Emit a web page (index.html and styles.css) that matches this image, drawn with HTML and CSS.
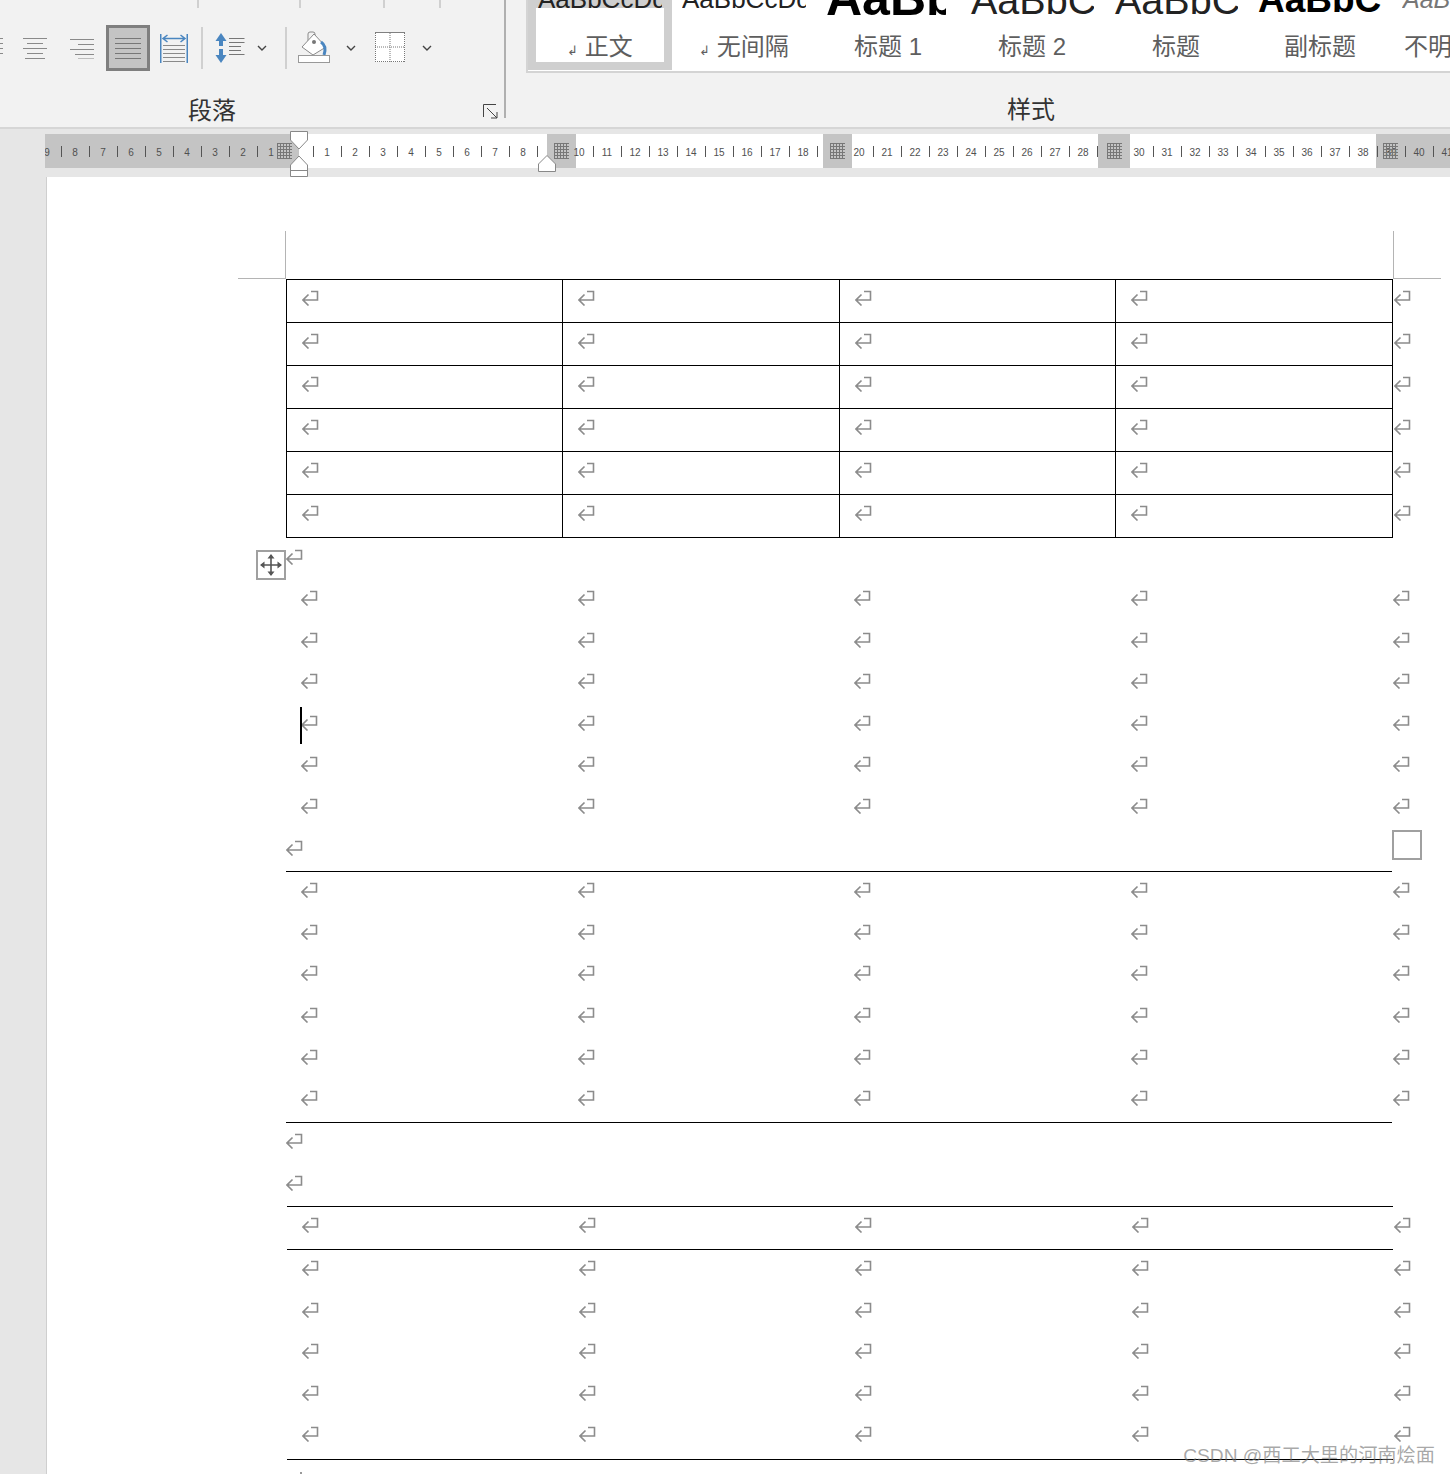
FILE: index.html
```html
<!DOCTYPE html>
<html>

<head>
	<meta charset="utf-8" />
	<title>文档</title>
	<link rel="stylesheet" href="styles.css">
</head>

<body>
	<svg class="defs" width="0" height="0">
		<symbol id="ret" viewBox="1 0 18 16">
			<path d="M10 1.5H16.5V10H2M7.5 4.5L2 10L7.5 15.5" fill="none" stroke="#8c8c8c" stroke-width="1.6" />
		</symbol>
		<symbol id="chev" viewBox="0 0 10 6">
			<path d="M1 1L5 5L9 1" fill="none" stroke="#444" stroke-width="1.4" />
		</symbol>
	</svg>

	<div class="ribbon">
		<div class="group-para">
			<div class="top-ticks">
				<i class="tt tt1"></i><i class="tt tt2"></i><i class="tt tt3"></i><i class="tt tt4"></i>
			</div>
			<div class="tools">
				<svg class="t-clip" width="3" height="22" viewBox="0 0 3 22">
					<path d="M0 1.5H3M0 6.5H3M0 11.5H3M0 16.5H3" stroke="#8a8a8a" />
				</svg>
				<svg class="t-center" width="26" height="22" viewBox="0 0 26 22">
					<path d="M1 1.5H25M5 6.5H21M1 11.5H25M5 16.5H21M3 21.5H23" stroke="#8a8a8a" />
				</svg>
				<svg class="t-right" width="26" height="22" viewBox="0 0 26 22">
					<path d="M1 2.5H25M9 7.5H25M1 12.5H25M6 17.5H25M9 22H25" stroke="#8a8a8a" />
				</svg>
				<button class="t-justify">
					<svg width="26" height="22" viewBox="0 0 26 22">
						<path d="M0 1.5H26M0 6.5H26M0 11.5H26M0 16.5H26M0 21.5H26" stroke="#777" />
					</svg>
				</button>
				<svg class="t-dist" width="28" height="29" viewBox="0 0 28 29">
					<path d="M.75 0V29M27.25 0V29M3 4.5H25M7.5 1L3 4.5L7.5 8M20.5 1L25 4.5L20.5 8" fill="none" stroke="#4a86c0" stroke-width="1.5" />
					<path d="M3 11.5H25M3 15.5H25M3 19.5H25M3 23.5H25M3 27.5H25" stroke="#8a8a8a" />
				</svg>
				<i class="t-sep sep1"></i>
				<svg class="t-spacing" width="30" height="30" viewBox="0 0 30 30">
					<path d="M6 0L11.5 8H8V13H4V8H.5ZM6 30L11.5 22H8V16H4V22H.5Z" fill="#4a86c0" />
					<path d="M14 5.5H29.5M14 9.5H29.5M14 13.5H26M14 17.5H26M14 21.5H29.5" stroke="#777" />
				</svg>
				<svg class="t-chev1" width="10" height="6"><use href="#chev" /></svg>
				<i class="t-sep sep2"></i>
				<svg class="t-bucket" width="34" height="32" viewBox="0 0 34 32">
					<path d="M11 9V2Q11 0 13 0H16Q18 0 18 2V10" fill="none" stroke="#8a8a8a" />
					<path d="M17 2L29 15L16 23L5 15Z" fill="#fff" stroke="#8a8a8a" />
					<circle cx="17" cy="10" r="2" fill="#777" />
					<path d="M24 10Q30 14 27 23" fill="none" stroke="#4a86c0" stroke-width="3" />
					<rect x="1.5" y="23.5" width="31" height="7" fill="#fff" stroke="#999" />
				</svg>
				<svg class="t-chev2" width="10" height="6"><use href="#chev" /></svg>
				<svg class="t-borders" width="30" height="30" viewBox="0 0 30 30">
					<rect x="0" y="0" width="30" height="30" fill="#fff" />
					<path d="M0 .5H30" stroke="#808080" />
					<path d="M.5 1V30M15 1V30M29.5 1V30M0 15H30M0 29.5H30" stroke="#777" stroke-dasharray="1 1" />
				</svg>
				<svg class="t-chev3" width="10" height="6"><use href="#chev" /></svg>
			</div>
			<div class="group-foot">
				<span class="group-name">段落</span>
				<svg class="launcher" width="15" height="15" viewBox="0 0 15 15">
					<path d="M13 .5H.5V13M4 4L14 14M14 8V14H8" fill="none" stroke="#444" />
				</svg>
			</div>
		</div>

		<div class="group-styles">
			<div class="gallery">
				<div class="style-cell selected">
					<div class="preview"><span class="pv-small">AaBbCcDd</span></div>
					<div class="style-name"><span class="small-ret">↲</span> 正文</div>
				</div>
				<div class="style-cell">
					<div class="preview"><span class="pv-small">AaBbCcDd</span></div>
					<div class="style-name"><span class="small-ret">↲</span> 无间隔</div>
				</div>
				<div class="style-cell">
					<div class="preview"><span class="pv-h1">AaBbC</span></div>
					<div class="style-name">标题 1</div>
				</div>
				<div class="style-cell">
					<div class="preview"><span class="pv-h2">AaBbC</span></div>
					<div class="style-name">标题 2</div>
				</div>
				<div class="style-cell">
					<div class="preview"><span class="pv-h2">AaBbC</span></div>
					<div class="style-name">标题</div>
				</div>
				<div class="style-cell">
					<div class="preview"><span class="pv-sub">AaBbC</span></div>
					<div class="style-name">副标题</div>
				</div>
				<div class="style-cell">
					<div class="preview"><span class="pv-em">AaBbCcDd</span></div>
					<div class="style-name">不明显强调</div>
				</div>
			</div>
			<div class="styles-foot">样式</div>
		</div>
	</div>

	<div class="ruler-band">
		<div class="ruler">
			<div class="ruler-nums">
				<span>9</span><span>8</span><span>7</span><span>6</span><span>5</span><span>4</span><span>3</span><span>2</span><span class="nobar">1</span><span></span>
				<span>1</span><span>2</span><span>3</span><span>4</span><span>5</span><span>6</span><span>7</span><span>8</span><span class="nobar"></span>
				<span>10</span><span>11</span><span>12</span><span>13</span><span>14</span><span>15</span><span>16</span><span>17</span><span>18</span><span class="nobar"></span>
				<span>20</span><span>21</span><span>22</span><span>23</span><span>24</span><span>25</span><span>26</span><span>27</span><span>28</span><span class="nobar"></span>
				<span>30</span><span>31</span><span>32</span><span>33</span><span>34</span><span>35</span><span>36</span><span>37</span><span>38</span><span>39</span>
				<span>40</span><span>41</span>
			</div>
			<i class="gridmark g1"></i><i class="gridmark g2"></i><i class="gridmark g3"></i><i class="gridmark g4"></i><i class="gridmark g5"></i>
		</div>
		<svg class="indent-left" width="18" height="46" viewBox="0 0 18 46">
			<path d="M.5 .5H17.5V9L9 18L.5 9Z" fill="#fff" stroke="#888" />
			<path d="M9 25L17.5 34V45.5H.5V34ZM.5 39.5H17.5" fill="#fff" stroke="#888" />
		</svg>
		<svg class="indent-right" width="18" height="17" viewBox="0 0 18 17">
			<path d="M9 .5L17.5 9V16.5H.5V9Z" fill="#fff" stroke="#888" />
		</svg>
	</div>

	<div class="workspace">
		<div class="page">
			<div class="crop-row"><i class="crop crop-l"></i><i class="crop crop-r"></i></div>

			<div class="boxed">
				<div class="row"><div class="cell"><svg class="mk"><use href="#ret" /></svg></div><div class="cell"><svg class="mk"><use href="#ret" /></svg></div><div class="cell"><svg class="mk"><use href="#ret" /></svg></div><div class="cell"><svg class="mk"><use href="#ret" /></svg></div><div class="end"><svg class="mk"><use href="#ret" /></svg></div></div>
				<div class="row"><div class="cell"><svg class="mk"><use href="#ret" /></svg></div><div class="cell"><svg class="mk"><use href="#ret" /></svg></div><div class="cell"><svg class="mk"><use href="#ret" /></svg></div><div class="cell"><svg class="mk"><use href="#ret" /></svg></div><div class="end"><svg class="mk"><use href="#ret" /></svg></div></div>
				<div class="row"><div class="cell"><svg class="mk"><use href="#ret" /></svg></div><div class="cell"><svg class="mk"><use href="#ret" /></svg></div><div class="cell"><svg class="mk"><use href="#ret" /></svg></div><div class="cell"><svg class="mk"><use href="#ret" /></svg></div><div class="end"><svg class="mk"><use href="#ret" /></svg></div></div>
				<div class="row"><div class="cell"><svg class="mk"><use href="#ret" /></svg></div><div class="cell"><svg class="mk"><use href="#ret" /></svg></div><div class="cell"><svg class="mk"><use href="#ret" /></svg></div><div class="cell"><svg class="mk"><use href="#ret" /></svg></div><div class="end"><svg class="mk"><use href="#ret" /></svg></div></div>
				<div class="row"><div class="cell"><svg class="mk"><use href="#ret" /></svg></div><div class="cell"><svg class="mk"><use href="#ret" /></svg></div><div class="cell"><svg class="mk"><use href="#ret" /></svg></div><div class="cell"><svg class="mk"><use href="#ret" /></svg></div><div class="end"><svg class="mk"><use href="#ret" /></svg></div></div>
				<div class="row"><div class="cell"><svg class="mk"><use href="#ret" /></svg></div><div class="cell"><svg class="mk"><use href="#ret" /></svg></div><div class="cell"><svg class="mk"><use href="#ret" /></svg></div><div class="cell"><svg class="mk"><use href="#ret" /></svg></div><div class="end"><svg class="mk"><use href="#ret" /></svg></div></div>
			</div>

			<div class="para para-first">
				<div class="move-handle">
					<svg width="22" height="22" viewBox="0 0 22 22">
						<path d="M11 1V21M1 11H21" stroke="#555" stroke-width="1.6" />
						<path d="M11 0L14.5 4.5H7.5ZM11 22L14.5 17.5H7.5ZM0 11L4.5 7.5V14.5ZM22 11L17.5 7.5V14.5Z" fill="#555" />
					</svg>
				</div>
				<svg class="mk"><use href="#ret" /></svg>
			</div>

			<div class="plain">
				<div class="row"><div class="cell"><svg class="mk"><use href="#ret" /></svg></div><div class="cell"><svg class="mk"><use href="#ret" /></svg></div><div class="cell"><svg class="mk"><use href="#ret" /></svg></div><div class="cell"><svg class="mk"><use href="#ret" /></svg></div><div class="end"><svg class="mk"><use href="#ret" /></svg></div></div>
				<div class="row"><div class="cell"><svg class="mk"><use href="#ret" /></svg></div><div class="cell"><svg class="mk"><use href="#ret" /></svg></div><div class="cell"><svg class="mk"><use href="#ret" /></svg></div><div class="cell"><svg class="mk"><use href="#ret" /></svg></div><div class="end"><svg class="mk"><use href="#ret" /></svg></div></div>
				<div class="row"><div class="cell"><svg class="mk"><use href="#ret" /></svg></div><div class="cell"><svg class="mk"><use href="#ret" /></svg></div><div class="cell"><svg class="mk"><use href="#ret" /></svg></div><div class="cell"><svg class="mk"><use href="#ret" /></svg></div><div class="end"><svg class="mk"><use href="#ret" /></svg></div></div>
				<div class="row"><div class="cell"><i class="caret"></i><svg class="mk"><use href="#ret" /></svg></div><div class="cell"><svg class="mk"><use href="#ret" /></svg></div><div class="cell"><svg class="mk"><use href="#ret" /></svg></div><div class="cell"><svg class="mk"><use href="#ret" /></svg></div><div class="end"><svg class="mk"><use href="#ret" /></svg></div></div>
				<div class="row"><div class="cell"><svg class="mk"><use href="#ret" /></svg></div><div class="cell"><svg class="mk"><use href="#ret" /></svg></div><div class="cell"><svg class="mk"><use href="#ret" /></svg></div><div class="cell"><svg class="mk"><use href="#ret" /></svg></div><div class="end"><svg class="mk"><use href="#ret" /></svg></div></div>
				<div class="row"><div class="cell"><svg class="mk"><use href="#ret" /></svg></div><div class="cell"><svg class="mk"><use href="#ret" /></svg></div><div class="cell"><svg class="mk"><use href="#ret" /></svg></div><div class="cell"><svg class="mk"><use href="#ret" /></svg></div><div class="end"><svg class="mk"><use href="#ret" /></svg></div></div>
			</div>

			<div class="para para-tight">
				<svg class="mk"><use href="#ret" /></svg>
				<i class="resize-box"></i>
			</div>

			<div class="plain ruled">
				<div class="row"><div class="cell"><svg class="mk"><use href="#ret" /></svg></div><div class="cell"><svg class="mk"><use href="#ret" /></svg></div><div class="cell"><svg class="mk"><use href="#ret" /></svg></div><div class="cell"><svg class="mk"><use href="#ret" /></svg></div><div class="end"><svg class="mk"><use href="#ret" /></svg></div></div>
				<div class="row"><div class="cell"><svg class="mk"><use href="#ret" /></svg></div><div class="cell"><svg class="mk"><use href="#ret" /></svg></div><div class="cell"><svg class="mk"><use href="#ret" /></svg></div><div class="cell"><svg class="mk"><use href="#ret" /></svg></div><div class="end"><svg class="mk"><use href="#ret" /></svg></div></div>
				<div class="row"><div class="cell"><svg class="mk"><use href="#ret" /></svg></div><div class="cell"><svg class="mk"><use href="#ret" /></svg></div><div class="cell"><svg class="mk"><use href="#ret" /></svg></div><div class="cell"><svg class="mk"><use href="#ret" /></svg></div><div class="end"><svg class="mk"><use href="#ret" /></svg></div></div>
				<div class="row"><div class="cell"><svg class="mk"><use href="#ret" /></svg></div><div class="cell"><svg class="mk"><use href="#ret" /></svg></div><div class="cell"><svg class="mk"><use href="#ret" /></svg></div><div class="cell"><svg class="mk"><use href="#ret" /></svg></div><div class="end"><svg class="mk"><use href="#ret" /></svg></div></div>
				<div class="row"><div class="cell"><svg class="mk"><use href="#ret" /></svg></div><div class="cell"><svg class="mk"><use href="#ret" /></svg></div><div class="cell"><svg class="mk"><use href="#ret" /></svg></div><div class="cell"><svg class="mk"><use href="#ret" /></svg></div><div class="end"><svg class="mk"><use href="#ret" /></svg></div></div>
				<div class="row"><div class="cell"><svg class="mk"><use href="#ret" /></svg></div><div class="cell"><svg class="mk"><use href="#ret" /></svg></div><div class="cell"><svg class="mk"><use href="#ret" /></svg></div><div class="cell"><svg class="mk"><use href="#ret" /></svg></div><div class="end"><svg class="mk"><use href="#ret" /></svg></div></div>
			</div>

			<div class="para para-after"><svg class="mk"><use href="#ret" /></svg></div>
			<div class="para para-after"><svg class="mk"><use href="#ret" /></svg></div>

			<div class="plain ruled shifted">
				<div class="row row-head"><div class="cell"><svg class="mk"><use href="#ret" /></svg></div><div class="cell"><svg class="mk"><use href="#ret" /></svg></div><div class="cell"><svg class="mk"><use href="#ret" /></svg></div><div class="cell"><svg class="mk"><use href="#ret" /></svg></div><div class="end"><svg class="mk"><use href="#ret" /></svg></div></div>
				<div class="row"><div class="cell"><svg class="mk"><use href="#ret" /></svg></div><div class="cell"><svg class="mk"><use href="#ret" /></svg></div><div class="cell"><svg class="mk"><use href="#ret" /></svg></div><div class="cell"><svg class="mk"><use href="#ret" /></svg></div><div class="end"><svg class="mk"><use href="#ret" /></svg></div></div>
				<div class="row"><div class="cell"><svg class="mk"><use href="#ret" /></svg></div><div class="cell"><svg class="mk"><use href="#ret" /></svg></div><div class="cell"><svg class="mk"><use href="#ret" /></svg></div><div class="cell"><svg class="mk"><use href="#ret" /></svg></div><div class="end"><svg class="mk"><use href="#ret" /></svg></div></div>
				<div class="row"><div class="cell"><svg class="mk"><use href="#ret" /></svg></div><div class="cell"><svg class="mk"><use href="#ret" /></svg></div><div class="cell"><svg class="mk"><use href="#ret" /></svg></div><div class="cell"><svg class="mk"><use href="#ret" /></svg></div><div class="end"><svg class="mk"><use href="#ret" /></svg></div></div>
				<div class="row"><div class="cell"><svg class="mk"><use href="#ret" /></svg></div><div class="cell"><svg class="mk"><use href="#ret" /></svg></div><div class="cell"><svg class="mk"><use href="#ret" /></svg></div><div class="cell"><svg class="mk"><use href="#ret" /></svg></div><div class="end"><svg class="mk"><use href="#ret" /></svg></div></div>
				<div class="row"><div class="cell"><svg class="mk"><use href="#ret" /></svg></div><div class="cell"><svg class="mk"><use href="#ret" /></svg></div><div class="cell"><svg class="mk"><use href="#ret" /></svg></div><div class="cell"><svg class="mk"><use href="#ret" /></svg></div><div class="end"><svg class="mk"><use href="#ret" /></svg></div></div>
			</div>
			<i class="next-dot"></i>
		</div>
	</div>

	<div class="watermark">CSDN @西工大里的河南烩面</div>
</body>

</html>
```

FILE: styles.css
```css
html,
body {
	margin: 0;
	height: 1474px;
	overflow: hidden;
}

body {
	position: relative;
	background: #e6e6e6;
	font-family: "Liberation Sans", "Noto Sans CJK SC", sans-serif;
	color: #444;
}

.defs {
	position: absolute;
}

svg {
	display: block;
	flex: none;
}

/* ribbon */
.ribbon {
	display: flex;
	height: 127px;
	background: #f2f2f2;
	border-bottom: 2px solid #d6d6d6;
	overflow: hidden;
}

.group-para {
	width: 504px;
	height: 118px;
	border-right: 2px solid #b0b0b0;
	flex: none;
}

.top-ticks {
	display: flex;
	height: 8px;
}

.tt {
	width: 2px;
	background: #d0d0d0;
}

.tt1 { margin-left: 197px; }
.tt2 { margin-left: 100px; }
.tt3 { margin-left: 82px; }
.tt4 { margin-left: 54px; }

.tools {
	display: flex;
	align-items: center;
	height: 46px;
	margin-top: 17px;
}

.t-center { margin-left: 19px; }
.t-right { margin-left: 21px; }

.t-justify {
	width: 44px;
	height: 46px;
	margin: 0 0 0 11px;
	padding: 0;
	flex: none;
	display: flex;
	align-items: center;
	justify-content: center;
	background: #c4c4c4;
	border: 3px solid #7f7f7f;
}

.t-dist { margin-left: 10px; }

.t-sep {
	width: 2px;
	height: 42px;
	background: #d0d0d0;
	flex: none;
}

.sep1 { margin-left: 13px; }
.sep2 { margin-left: 18px; }
.t-spacing { margin-left: 12px; }
.t-chev1 { margin-left: 12px; }
.t-bucket { margin-left: 10px; overflow: visible; }
.t-chev2 { margin-left: 15px; }
.t-borders { margin-left: 19px; margin-bottom: 2px; }
.t-chev3 { margin-left: 17px; }

.group-foot {
	display: flex;
	align-items: center;
	height: 32px;
	margin-top: 24px;
	padding-left: 188px;
}

.group-name,
.styles-foot {
	font-size: 24px;
	line-height: 32px;
	color: #333;
}

.launcher {
	margin-left: auto;
	margin-right: 6px;
}

.group-styles {
	flex: 1;
	min-width: 0;
	padding-left: 20px;
}

.gallery {
	display: flex;
	height: 71px;
	background: #fff;
	border-left: 2px solid #d4d4d4;
	border-bottom: 2px solid #d4d4d4;
	overflow: hidden;
}

.style-cell {
	width: 144px;
	height: 70px;
	flex: none;
	overflow: hidden;
}

.selected {
	box-shadow: inset 0 0 0 8px #cfcfcf;
}

.preview {
	height: 31px;
	margin-left: 10px;
	width: 124px;
	overflow: hidden;
	white-space: nowrap;
	color: #222;
}

.preview span {
	display: block;
	line-height: 1;
}

.pv-small {
	font-size: 26px;
	margin-top: -14px;
}

.preview .pv-h1 {
	width: 120px;
	overflow: hidden;
	font-size: 50px;
	font-weight: bold;
	margin-top: -27px;
	color: #000;
}

.pv-h2 {
	font-size: 39.5px;
	margin-top: -19px;
	margin-left: 1px;
}

.pv-sub {
	font-size: 37px;
	font-weight: bold;
	margin-top: -19px;
	color: #000;
}

.pv-em {
	font-size: 25px;
	font-style: italic;
	margin-top: -13px;
	margin-left: 1px;
	color: #777;
}

.style-name {
	font-size: 24px;
	line-height: 32px;
	text-align: center;
	white-space: nowrap;
	color: #5e5e5e;
}

.small-ret {
	font-size: 13px;
}

.styles-foot {
	margin-top: 21px;
	padding-left: 481px;
}

/* ruler */
.ruler-band {
	position: relative;
	height: 48px;
	box-sizing: border-box;
	padding: 5px 0 0 45px;
	background: #e6e6e6;
}

.ruler {
	position: relative;
	height: 34px;
	overflow: hidden;
	background: linear-gradient(to right,
			#c4c4c4 0 254px,
			#fff 254px 502px,
			#c4c4c4 502px 531px,
			#fff 531px 778px,
			#c4c4c4 778px 807px,
			#fff 807px 1053px,
			#c4c4c4 1053px 1085px,
			#fff 1085px 1331px,
			#c4c4c4 1331px);
}

.ruler-nums {
	display: flex;
	margin-left: -11px;
	font-size: 10px;
	line-height: 38px;
	color: #505050;
}

.ruler-nums span {
	width: 28px;
	height: 34px;
	box-sizing: border-box;
	padding-right: 2px;
	flex: none;
	text-align: center;
	background: linear-gradient(#555, #555) right center / 1px 11px no-repeat;
}

.ruler-nums .nobar {
	background: none;
}

.gridmark {
	position: absolute;
	top: 9px;
	width: 15px;
	height: 16px;
	background:
		repeating-linear-gradient(to right, #777 0 1px, transparent 1px 3px),
		repeating-linear-gradient(to bottom, #777 0 1px, transparent 1px 3px);
}

.g1 { left: 232px; }
.g2 { left: 509px; }
.g3 { left: 785px; }
.g4 { left: 1062px; }
.g5 { left: 1338px; }

.indent-left {
	position: absolute;
	left: 290px;
	top: 2px;
}

.indent-right {
	position: absolute;
	left: 538px;
	top: 26px;
}

/* document page */
.workspace {
	padding-left: 46px;
}

.page {
	position: relative;
	height: 1297px;
	padding-left: 239px;
	background: #fff;
	border-left: 1px solid #cfcfcf;
}

.crop-row {
	display: flex;
	justify-content: space-between;
	width: 1203px;
	margin-left: -48px;
	padding-top: 54px;
}

.crop {
	width: 47px;
	height: 47px;
	border-bottom: 1px solid #b4b4b4;
}

.crop-l { border-right: 1px solid #b4b4b4; }
.crop-r { border-left: 1px solid #b4b4b4; }

.row {
	display: grid;
	grid-template-columns: repeat(4, 276.5px) 30px;
	height: 41.6px;
	box-sizing: border-box;
	padding-top: 9px;
}

.cell {
	position: relative;
	padding-left: 15px;
}

.end {
	padding-left: 1px;
}

.mk {
	width: 18px;
	height: 16px;
}

.boxed {
	width: 1107px;
	box-sizing: border-box;
	border-left: 1px solid #000;
	border-top: 1px solid #000;
}

.boxed .row {
	grid-template-columns: 276px 277px 276px 277px 30px;
	height: 43px;
	padding-top: 0;
}

.boxed .cell {
	height: 43px;
	box-sizing: border-box;
	padding-top: 10px;
	border-right: 1px solid #000;
	border-bottom: 1px solid #000;
}

.boxed .end {
	padding-top: 10px;
	padding-left: 1px;
}

.para {
	position: relative;
	height: 41.6px;
	box-sizing: border-box;
	padding-top: 9px;
}

.para-first {
	margin-top: 2px;
	height: 41px;
	padding-top: 9px;
}

.para-tight {
	height: 40.6px;
}

.para-after {
	padding-top: 10.5px;
}

.move-handle {
	position: absolute;
	left: -30px;
	top: 10px;
	width: 26px;
	height: 26px;
	display: flex;
	align-items: center;
	justify-content: center;
	border: 2px solid #a0a0a0;
}

.resize-box {
	position: absolute;
	left: 1106px;
	top: -1px;
	width: 26px;
	height: 26px;
	border: 2px solid #a0a0a0;
}

.caret {
	position: absolute;
	left: 14px;
	top: -8px;
	width: 2px;
	height: 37px;
	background: #000;
}

.ruled {
	width: 1106px;
	border-top: 1px solid #000;
	border-bottom: 1px solid #000;
}

.ruled .row {
	padding-top: 10px;
}

.shifted {
	margin-left: 1px;
	padding-bottom: 1px;
}

.ruled .row-head {
	height: 43px;
	border-bottom: 1px solid #000;
}

.next-dot {
	display: block;
	width: 2px;
	height: 2px;
	margin: 12px 0 0 14px;
	background: #999;
}

.watermark {
	position: absolute;
	right: 15px;
	bottom: 6px;
	font-size: 19.2px;
	line-height: 24px;
	white-space: nowrap;
	color: rgba(110, 110, 110, 0.6);
}
```
